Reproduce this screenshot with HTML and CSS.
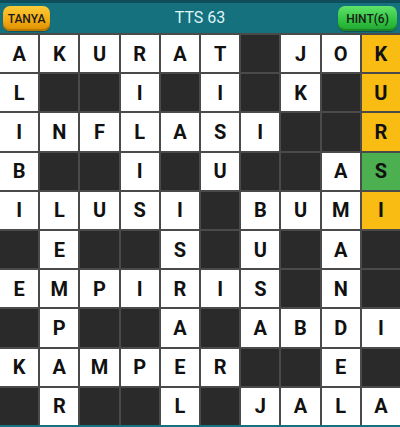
FILE: index.html
```html
<!DOCTYPE html>
<html>
<head>
<meta charset="utf-8">
<link rel="stylesheet" href="styles.css">
</head>
<body>
<div class="app">
  <header class="bar">
    <button class="btn btn-ask">TANYA</button>
    <div class="title">TTS 63</div>
    <button class="btn btn-hint">HINT(6)</button>
  </header>
  <div class="grid">
    <div class="c">A</div><div class="c">K</div><div class="c">U</div><div class="c">R</div><div class="c">A</div><div class="c">T</div><div class="c x"></div><div class="c">J</div><div class="c">O</div><div class="c y">K</div>
    <div class="c">L</div><div class="c x"></div><div class="c x"></div><div class="c">I</div><div class="c x"></div><div class="c">I</div><div class="c x"></div><div class="c">K</div><div class="c x"></div><div class="c y">U</div>
    <div class="c">I</div><div class="c">N</div><div class="c">F</div><div class="c">L</div><div class="c">A</div><div class="c">S</div><div class="c">I</div><div class="c x"></div><div class="c x"></div><div class="c y">R</div>
    <div class="c">B</div><div class="c x"></div><div class="c x"></div><div class="c">I</div><div class="c x"></div><div class="c">U</div><div class="c x"></div><div class="c x"></div><div class="c">A</div><div class="c g">S</div>
    <div class="c">I</div><div class="c">L</div><div class="c">U</div><div class="c">S</div><div class="c">I</div><div class="c x"></div><div class="c">B</div><div class="c">U</div><div class="c">M</div><div class="c y">I</div>
    <div class="c x"></div><div class="c">E</div><div class="c x"></div><div class="c x"></div><div class="c">S</div><div class="c x"></div><div class="c">U</div><div class="c x"></div><div class="c">A</div><div class="c x"></div>
    <div class="c">E</div><div class="c">M</div><div class="c">P</div><div class="c">I</div><div class="c">R</div><div class="c">I</div><div class="c">S</div><div class="c x"></div><div class="c">N</div><div class="c x"></div>
    <div class="c x"></div><div class="c">P</div><div class="c x"></div><div class="c x"></div><div class="c">A</div><div class="c x"></div><div class="c">A</div><div class="c">B</div><div class="c">D</div><div class="c">I</div>
    <div class="c">K</div><div class="c">A</div><div class="c">M</div><div class="c">P</div><div class="c">E</div><div class="c">R</div><div class="c x"></div><div class="c x"></div><div class="c">E</div><div class="c x"></div>
    <div class="c x"></div><div class="c">R</div><div class="c x"></div><div class="c x"></div><div class="c">L</div><div class="c x"></div><div class="c">J</div><div class="c">A</div><div class="c">L</div><div class="c">A</div>
  </div>
  <div class="foot"></div>
</div>
</body>
</html>
```
FILE: styles.css
```css
html, body {
  margin: 0;
  padding: 0;
  background: #15707f;
}
.app {
  width: 400px;
  height: 427px;
  display: flex;
  flex-direction: column;
  font-family: Roboto, "Liberation Sans", Arial, sans-serif;
}
.bar {
  height: 30px;
  border-top: 3px solid #0e4d59;
  background: #16717f;
  display: flex;
  align-items: center;
  justify-content: space-between;
  padding: 0 3px;
  position: relative;
}
.title {
  position: absolute;
  left: 0;
  right: 0;
  text-align: center;
  color: #dff5f5;
  font-size: 16px;
  line-height: 30px;
  top: 0;
  pointer-events: none;
}
.btn {
  border: none;
  border-radius: 7px;
  height: 25px;
  font-family: Roboto, "Liberation Sans", Arial, sans-serif;
  font-size: 12px;
  font-weight: 500;
  color: #1a1a1a;
  padding: 0;
  margin-top: 1px;
}
.btn-ask {
  width: 47px;
  background: linear-gradient(#fccb3a, #f3a90e 60%, #d98e05);
  box-shadow: inset 0 -2px 0 #b87800, 0 1px 1px rgba(0,0,0,0.3);
}
.btn-hint {
  width: 59px;
  background: linear-gradient(#5fe36a, #2fc23f 60%, #22a431);
  box-shadow: inset 0 -2px 0 #1a8526, 0 1px 1px rgba(0,0,0,0.3);
}
.grid {
  flex: 1;
  display: grid;
  grid-template-columns: repeat(10, 1fr);
  grid-template-rows: repeat(10, 1fr);
  gap: 2px;
  background: #4a4a4a;
  padding: 2px 0 0 0;
}
.c {
  background: #ffffff;
  display: flex;
  align-items: center;
  justify-content: center;
  font-size: 20px;
  font-weight: 700;
  color: #111;
}
.c.x { background: #2a2a2a; }
.c.y { background: #f8bc12; }
.c.g { background: #4caf50; }
.foot {
  height: 2px;
  background: #15707f;
}
```
